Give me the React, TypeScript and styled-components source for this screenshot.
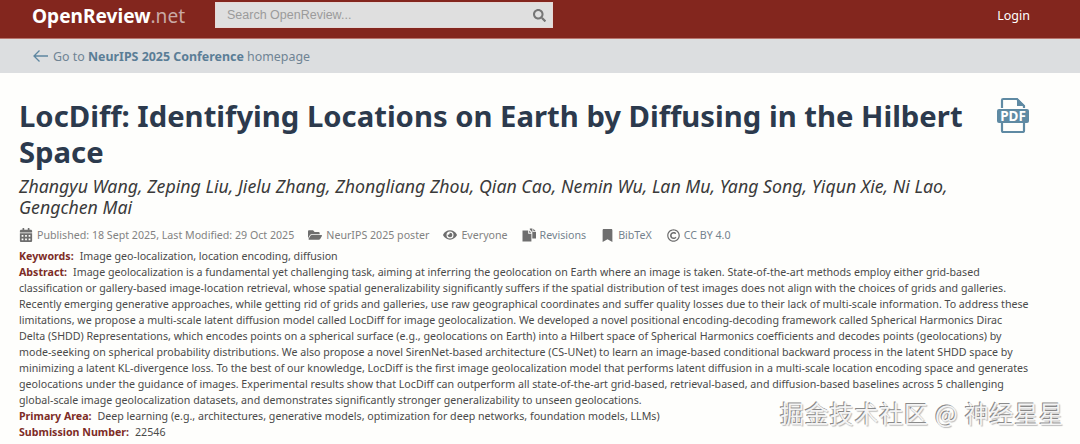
import React from 'react'
import styled, { createGlobalStyle } from 'styled-components'
import { FaSearch, FaCalendarAlt, FaFolderOpen, FaEye, FaBookmark, FaRegCopyright } from 'react-icons/fa'

const GlobalStyle = createGlobalStyle`
  html, body {
    margin: 0;
    padding: 0;
    background: #fefefc;
    overflow: hidden;
    font-family: "Noto Sans", sans-serif;
  }
`

const Page = styled.div`
  width: 1080px;
  height: 444px;
  position: relative;
  overflow: hidden;
  background: #fefefc;
`

const Header = styled.header`
  height: 38px;
  background: #83261e;
  border-bottom: 1px solid #b8766f;
  display: flex;
  align-items: flex-start;
  padding-left: 32px;
  padding-right: 50px;
  box-sizing: content-box;
`

const Logo = styled.div`
  width: 152px;
  margin-top: 3px;
  font-size: 19.1px;
  line-height: 26px;
  font-weight: 700;
  color: #fff;
  white-space: nowrap;
`

const LogoNet = styled.span`
  font-weight: 400;
  color: #c9a9a5;
`

const SearchBox = styled.div`
  margin-top: 2px;
  margin-left: 31px;
  width: 338px;
  height: 26px;
  box-sizing: border-box;
  background: #dfdfdf;
  border: 1px solid #e6d8d6;
  display: flex;
  align-items: center;
  justify-content: space-between;
  padding: 0 6px 0 11px;
  font-family: "Liberation Sans", Arial, sans-serif;
  font-size: 12.5px;
  color: #9b9b9b;
  svg {
    color: #757575;
    font-size: 13px;
  }
`

const Login = styled.a`
  margin-left: auto;
  margin-top: 6px;
  font-size: 12.5px;
  line-height: 20px;
  color: #fff;
`

const SubBar = styled.div`
  height: 34px;
  background: #dcdee0;
  display: flex;
  align-items: center;
  padding-left: 33px;
  font-size: 12.42px;
  color: #6f8494;
  svg {
    margin-right: 5px;
  }
  strong {
    color: #5a7d96;
    font-weight: 700;
  }
`

const Content = styled.main`
  padding: 0 19px;
  position: relative;
`

const TitleRow = styled.div`
  display: flex;
  justify-content: space-between;
  align-items: flex-start;
  margin-top: 25px;
`

const Title = styled.h1`
  margin: 0;
  width: 960px;
  font-size: 29.25px;
  line-height: 36px;
  font-weight: 700;
  color: #2c3a4d;
`

const PdfLink = styled.a`
  margin-right: 32px;
  margin-top: -1px;
  display: block;
  svg {
    display: block;
  }
`

const Authors = styled.h3`
  margin: 6px 0 0;
  width: 960px;
  font-size: 17.75px;
  line-height: 21px;
  font-weight: 400;
  font-style: italic;
  color: #3a3a3a;
`

const MetaRow = styled.div`
  display: flex;
  align-items: center;
  margin-top: 7px;
  height: 20px;
  font-size: 10.65px;
`

const MetaItem = styled.span<{ $gap: number; $link?: boolean }>`
  display: inline-flex;
  align-items: center;
  margin-right: ${(p) => p.$gap}px;
  color: ${(p) => (p.$link ? '#74828e' : '#828282')};
  svg {
    color: #6e6e6e;
    font-size: ${(p) => (p.$link ? 13 : 14)}px;
    margin-right: 4px;
  }
`

const Details = styled.div`
  margin-top: 3px;
  font-size: 10.65px;
  line-height: 16px;
  color: #4a4a4a;
`

const Line = styled.div`
  white-space: nowrap;
`

const Label = styled.strong`
  color: #7d2c26;
  font-weight: 700;
  margin-right: 6px;
`

const Watermark = styled.div`
  position: absolute;
  left: 780px;
  top: 397px;
  font-family: "Noto Sans CJK SC", "Noto Sans", sans-serif;
  font-size: 24px;
  line-height: 32px;
  letter-spacing: 0.8px;
  white-space: nowrap;
  color: #f4f4f4;
  text-shadow: -1px -1px 0 #8a8a8a, 1px 1px 1px #bbb;
`

const abstractLines = [
  'classification or gallery-based image-location retrieval, whose spatial generalizability significantly suffers if the spatial distribution of test images does not align with the choices of grids and galleries.',
  'Recently emerging generative approaches, while getting rid of grids and galleries, use raw geographical coordinates and suffer quality losses due to their lack of multi-scale information. To address these',
  'limitations, we propose a multi-scale latent diffusion model called LocDiff for image geolocalization. We developed a novel positional encoding-decoding framework called Spherical Harmonics Dirac',
  'Delta (SHDD) Representations, which encodes points on a spherical surface (e.g., geolocations on Earth) into a Hilbert space of Spherical Harmonics coefficients and decodes points (geolocations) by',
  'mode-seeking on spherical probability distributions. We also propose a novel SirenNet-based architecture (CS-UNet) to learn an image-based conditional backward process in the latent SHDD space by',
  'minimizing a latent KL-divergence loss. To the best of our knowledge, LocDiff is the first image geolocalization model that performs latent diffusion in a multi-scale location encoding space and generates',
  'geolocations under the guidance of images. Experimental results show that LocDiff can outperform all state-of-the-art grid-based, retrieval-based, and diffusion-based baselines across 5 challenging',
  'global-scale image geolocalization datasets, and demonstrates significantly stronger generalizability to unseen geolocations.',
]

const BackArrow = () => (
  <svg width="15" height="14" viewBox="0 0 15 14" fill="none" stroke="#5d86a0" strokeWidth="1.3">
    <path d="M1 7h14M6.5 1.5 1 7l5.5 5.5" />
  </svg>
)

const FilesIcon = () => (
  <svg width="14" height="14" viewBox="0 0 14 14" fill="currentColor">
    <path d="M0.5 2.5h5.7v3.2h3.2v7.8H0.5z" />
    <path d="M7.2 2.5 9.3 4.7H7.2z" />
    <path d="M7.8 0.5h2.6v3.6H14v6.4h-3.7V4.2L7.8 1.6z" />
    <path d="M11.3 0.7 13.8 3.2h-2.5z" />
  </svg>
)

export default function App() {
  return (
    <Page>
      <GlobalStyle />
      <Header>
        <Logo>
          OpenReview<LogoNet>.net</LogoNet>
        </Logo>
        <SearchBox>
          <span>Search OpenReview...</span>
          <FaSearch />
        </SearchBox>
        <Login>Login</Login>
      </Header>
      <SubBar>
        <BackArrow />
        <span>
          Go to <strong>NeurIPS 2025 Conference</strong> homepage
        </span>
      </SubBar>
      <Content>
        <TitleRow>
          <Title>LocDiff: Identifying Locations on Earth by Diffusing in the Hilbert Space</Title>
          <PdfLink>
            <svg width="32" height="36" viewBox="0 0 32 36">
              <path
                d="M5 11V3.2A1.2 1.2 0 0 1 6.2 2H20l7 7v2M27 26v7.8a1.2 1.2 0 0 1-1.2 1.2H6.2A1.2 1.2 0 0 1 5 33.8V26"
                fill="none"
                stroke="#5f8aa3"
                strokeWidth="2.2"
              />
              <path d="M20 1v8h8z" fill="#5f8aa3" />
              <rect x="0" y="12" width="32" height="14" rx="2" fill="#5f8aa3" />
              <text x="16" y="23.6" textAnchor="middle" fontFamily="'Noto Sans', sans-serif" fontWeight="700" fontSize="13.5" fill="#fff">
                PDF
              </text>
            </svg>
          </PdfLink>
        </TitleRow>
        <Authors>
          Zhangyu Wang, Zeping Liu, Jielu Zhang, Zhongliang Zhou, Qian Cao, Nemin Wu, Lan Mu, Yang Song, Yiqun Xie, Ni Lao, Gengchen Mai
        </Authors>
        <MetaRow>
          <MetaItem $gap={14}><FaCalendarAlt />Published: 18 Sept 2025, Last Modified: 29 Oct 2025</MetaItem>
          <MetaItem $gap={14}><FaFolderOpen />NeurIPS 2025 poster</MetaItem>
          <MetaItem $gap={14}><FaEye />Everyone</MetaItem>
          <MetaItem $gap={15} $link><FilesIcon />Revisions</MetaItem>
          <MetaItem $gap={15} $link><FaBookmark />BibTeX</MetaItem>
          <MetaItem $gap={0} $link><FaRegCopyright />CC BY 4.0</MetaItem>
        </MetaRow>
        <Details>
          <Line><Label>Keywords:</Label>Image geo-localization, location encoding, diffusion</Line>
          <Line>
            <Label>Abstract:</Label>Image geolocalization is a fundamental yet challenging task, aiming at inferring the geolocation on Earth where an image is taken. State-of-the-art methods employ either grid-based
          </Line>
          {abstractLines.map((text) => (
            <Line key={text}>{text}</Line>
          ))}
          <Line><Label>Primary Area:</Label>Deep learning (e.g., architectures, generative models, optimization for deep networks, foundation models, LLMs)</Line>
          <Line><Label>Submission Number:</Label>22546</Line>
        </Details>
      </Content>
      <Watermark>掘金技术社区 @ 神经星星</Watermark>
    </Page>
  )
}
